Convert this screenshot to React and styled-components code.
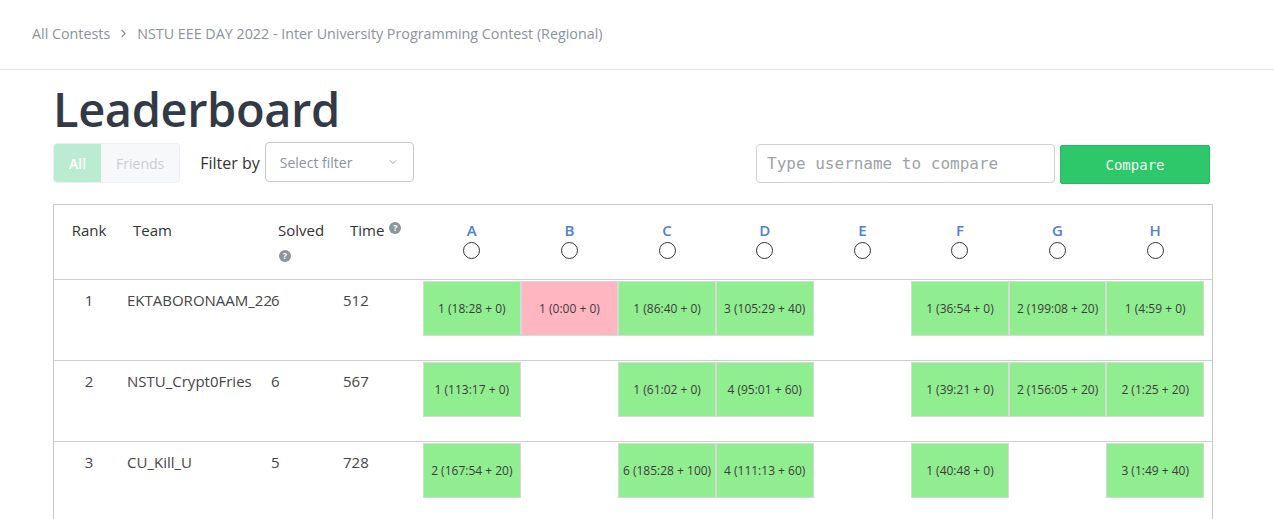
import React from 'react';
import styled, { createGlobalStyle } from 'styled-components';
import { ChevronRight, ChevronDown } from 'lucide-react';

const GlobalStyle = createGlobalStyle`
  body {
    margin: 0;
    background: #fff;
    font-family: "Open Sans", "Liberation Sans", sans-serif;
  }
`;

const Crumbs = styled.nav`
  height: 66px;
  padding: 0 0 3px 32px;
  display: flex;
  align-items: center;
  gap: 7px;
  border-bottom: 1px solid #e3e4e6;
  font-size: 14.3px;
  color: #8c929b;
`;

const Main = styled.main`
  width: 1160px;
  margin-left: 53px;
`;

const Title = styled.h1`
  margin: 11px 0 0;
  font-size: 47px;
  line-height: 1.2;
  font-weight: 600;
  color: #323a46;
  letter-spacing: -0.4px;
`;

const Controls = styled.div`
  margin-top: 5px;
  display: flex;
  align-items: center;
  height: 42px;
`;

const Toggle = styled.div`
  display: flex;
  height: 40px;
  border-radius: 4px;
  overflow: hidden;
  border: 1px solid #eceef1;
  box-sizing: border-box;
`;

const ToggleBtn = styled.button`
  border: none;
  padding: 0 15px;
  font-family: inherit;
  font-size: 14px;
  font-weight: ${p => (p.$active ? 600 : 400)};
  background: ${p => (p.$active ? '#bbecd1' : '#f7f8fa')};
  color: ${p => (p.$active ? '#fff' : '#c9ccd1')};
`;

const FilterLabel = styled.span`
  margin-left: 20px;
  margin-right: 5px;
  font-size: 16px;
  color: #333;
`;

const Select = styled.div`
  width: 149px;
  height: 40px;
  box-sizing: border-box;
  border: 1px solid #c6c8cc;
  border-radius: 4px;
  display: flex;
  align-items: center;
  justify-content: space-between;
  padding: 0 14px 0 14px;
  font-size: 14px;
  color: #8c929b;
  margin-top: -2px;
`;

const Spacer = styled.div`
  flex: 1;
`;

const CompareInput = styled.input`
  width: 299px;
  height: 39px;
  box-sizing: border-box;
  border: 1px solid #cfd1d4;
  border-radius: 4px;
  padding: 0 10px;
  font-family: "DejaVu Sans Mono", monospace;
  font-size: 16px;
  color: #333;
  &::placeholder {
    color: #9ea2a8;
  }
`;

const CompareBtn = styled.button`
  margin-left: 5px;
  margin-right: 3px;
  width: 150px;
  height: 39px;
  margin-top: 3px;
  border: 1px solid #29b862;
  border-radius: 2px;
  background: #2ec86a;
  color: #eefcf2;
  font-family: "DejaVu Sans Mono", monospace;
  font-size: 14px;
`;

const Board = styled.div`
  margin-top: 20px;
  border: 1px solid #c9c9c9;
`;

const Row = styled.div`
  display: grid;
  grid-template-columns: 70px 142px 72px 85px repeat(8, 1fr);
  padding-right: 8px;
  height: ${p => (p.$head ? '74px' : '80px')};
  border-bottom: 1px solid #cfcfcf;
  color: ${p => (p.$head ? '#333' : '#454545')};
  font-size: 15px;
  line-height: 22px;
`;

const HeadCell = styled.div`
  padding-top: 14px;
  padding-left: ${p => p.$pad || 0}px;
  text-align: ${p => (p.$center ? 'center' : 'left')};
`;

const Cell = styled.div`
  padding-top: 9px;
  padding-left: ${p => p.$pad || 0}px;
  text-align: ${p => (p.$center ? 'center' : 'left')};
  white-space: nowrap;
`;

const Help = styled.span`
  display: inline-block;
  width: 12px;
  height: 12px;
  border-radius: 50%;
  background: #8e949c;
  color: #fff;
  font-size: 9px;
  font-weight: 700;
  line-height: 12px;
  text-align: center;
  vertical-align: ${p => (p.$raised ? '5px' : '-1px')};
  margin-left: ${p => (p.$raised ? '5px' : '1px')};
`;

const ProbHead = styled.div`
  padding-top: 14px;
  display: flex;
  flex-direction: column;
  align-items: center;
`;

const Letter = styled.span`
  color: #4d82cf;
  font-weight: 600;
  font-size: 15px;
`;

const Radio = styled.span`
  width: 15px;
  height: 15px;
  border: 1.2px solid #333;
  border-radius: 50%;
  margin-top: 1px;
`;

const ProbCell = styled.div`
  padding: 1px 0 0 0;
`;

const Attempt = styled.div`
  height: 55px;
  box-sizing: border-box;
  border: 1px solid #d2dcd2;
  background: ${p => (p.$status === 'wrong' ? 'lightpink' : 'lightgreen')};
  display: flex;
  align-items: center;
  justify-content: center;
  font-size: 12px;
  color: #3c3c3c;
  white-space: nowrap;
`;

const problems = ['A', 'B', 'C', 'D', 'E', 'F', 'G', 'H'];

const teams = [
  {
    rank: 1, name: 'EKTABORONAAM_22', solved: 6, time: 512,
    cells: [['1 (18:28 + 0)'], ['1 (0:00 + 0)', 'wrong'], ['1 (86:40 + 0)'], ['3 (105:29 + 40)'], null,
      ['1 (36:54 + 0)'], ['2 (199:08 + 20)'], ['1 (4:59 + 0)']],
  },
  {
    rank: 2, name: 'NSTU_Crypt0Fries', solved: 6, time: 567,
    cells: [['1 (113:17 + 0)'], null, ['1 (61:02 + 0)'], ['4 (95:01 + 60)'], null,
      ['1 (39:21 + 0)'], ['2 (156:05 + 20)'], ['2 (1:25 + 20)']],
  },
  {
    rank: 3, name: 'CU_Kill_U', solved: 5, time: 728,
    cells: [['2 (167:54 + 20)'], null, ['6 (185:28 + 100)'], ['4 (111:13 + 60)'], null,
      ['1 (40:48 + 0)'], null, ['3 (1:49 + 40)']],
  },
];

export default function App() {
  return (
    <>
      <GlobalStyle />
      <Crumbs>
        <span>All Contests</span>
        <ChevronRight size={13} strokeWidth={2} />
        <span>NSTU EEE DAY 2022 - Inter University Programming Contest (Regional)</span>
      </Crumbs>
      <Main>
        <Title>Leaderboard</Title>
        <Controls>
          <Toggle>
            <ToggleBtn $active>All</ToggleBtn>
            <ToggleBtn>Friends</ToggleBtn>
          </Toggle>
          <FilterLabel>Filter by</FilterLabel>
          <Select>
            <span>Select filter</span>
            <ChevronDown size={12} strokeWidth={2} color="#9a9ea5" />
          </Select>
          <Spacer />
          <CompareInput placeholder="Type username to compare" />
          <CompareBtn>Compare</CompareBtn>
        </Controls>
        <Board>
          <Row $head>
            <HeadCell $center>Rank</HeadCell>
            <HeadCell $pad={9}>Team</HeadCell>
            <HeadCell $pad={12}>Solved <Help>?</Help></HeadCell>
            <HeadCell $pad={12}>Time<Help $raised>?</Help></HeadCell>
            {problems.map(p => (
              <ProbHead key={p}>
                <Letter>{p}</Letter>
                <Radio />
              </ProbHead>
            ))}
          </Row>
          {teams.map(t => (
            <Row key={t.rank}>
              <Cell $center>{t.rank}</Cell>
              <Cell $pad={3}>{t.name}</Cell>
              <Cell $pad={5}>{t.solved}</Cell>
              <Cell $pad={5}>{t.time}</Cell>
              {t.cells.map((c, i) => (
                <ProbCell key={i}>
                  {c && <Attempt $status={c[1]}>{c[0]}</Attempt>}
                </ProbCell>
              ))}
            </Row>
          ))}
        </Board>
      </Main>
    </>
  );
}
